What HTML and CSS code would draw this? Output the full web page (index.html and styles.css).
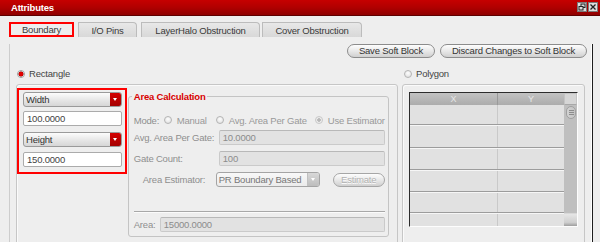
FILE: index.html
```html
<!DOCTYPE html>
<html lang="en">
<head>
	<meta charset="utf-8">
	<title>Attributes</title>
	<link rel="stylesheet" href="styles.css">
</head>
<body>

	<div class="titlebar">
		<span class="title">Attributes</span>
		<span class="win-btns">
			<svg class="win-btn" viewBox="0 0 10 10">
				<rect x="0.5" y="0.5" width="9" height="9" fill="#dedede" stroke="#7a7a7a"/>
				<rect x="4" y="2" width="4" height="3.5" fill="none" stroke="#222"/>
				<rect x="2" y="4.5" width="4" height="3.5" fill="#dedede" stroke="#222"/>
			</svg>
			<svg class="win-btn" viewBox="0 0 10 10">
				<rect x="0.5" y="0.5" width="9" height="9" fill="#dedede" stroke="#7a7a7a"/>
				<path d="M2.5 2.5 L7.5 7.5 M7.5 2.5 L2.5 7.5" stroke="#222" stroke-width="1.3"/>
			</svg>
		</span>
	</div>

	<div class="tabs">
		<div class="tab active tab-boundary">Boundary</div>
		<div class="tab tab-io">I/O Pins</div>
		<div class="tab tab-halo">LayerHalo Obstruction</div>
		<div class="tab tab-cover">Cover Obstruction</div>
	</div>

	<div class="panel">

		<div class="actions">
			<button class="pill">Save Soft Block</button>
			<button class="pill">Discard Changes to Soft Block</button>
		</div>

		<div class="shapes">

			<div class="shape shape-rect">
				<div class="radio-line"><span class="radio on"></span>Rectangle</div>
				<div class="group group-rect">

					<div class="dims">
						<div class="select red"><span>Width</span><i class="arrow"></i></div>
						<div class="field gap-a">100.0000</div>
						<div class="select red gap-b"><span>Height</span><i class="arrow"></i></div>
						<div class="field gap-c">150.0000</div>
					</div>

					<fieldset class="calc">
						<legend>Area Calculation</legend>

						<div class="row row-mode">
							<span class="lbl lbl-mode">Mode:</span>
							<span class="radio off"></span><span class="opt">Manual</span>
							<span class="radio off mode-2"></span><span class="opt">Avg. Area Per Gate</span>
							<span class="radio dis mode-3"></span><span class="opt">Use Estimator</span>
						</div>

						<div class="row row-avg">
							<span class="lbl">Avg. Area Per Gate:</span>
							<div class="field dis">10.0000</div>
						</div>

						<div class="row row-gate">
							<span class="lbl">Gate Count:</span>
							<div class="field dis">100</div>
						</div>

						<div class="row row-est">
							<span class="lbl lbl-est">Area Estimator:</span>
							<div class="select grey"><span>PR Boundary Based</span><i class="arrow"></i></div>
							<button class="pill pill-dis">Estimate</button>
						</div>

						<div class="sep"></div>

						<div class="row row-area">
							<span class="lbl lbl-area">Area:</span>
							<div class="field dis">15000.0000</div>
						</div>
					</fieldset>

				</div>
			</div>

			<div class="shape shape-poly">
				<div class="radio-line"><span class="radio off"></span>Polygon</div>
				<div class="group group-poly">
					<div class="table">
						<div class="cols">
							<div class="trow thead"><span class="c1">X</span><span class="c2">Y</span></div>
							<div class="trow tr-1"><span class="c1"></span><span class="c2"></span></div>
							<div class="trow tr-2"><span class="c1"></span><span class="c2"></span></div>
							<div class="trow tr-3"><span class="c1"></span><span class="c2"></span></div>
							<div class="trow tr-4"><span class="c1"></span><span class="c2"></span></div>
							<div class="trow tr-5"><span class="c1"></span><span class="c2"></span></div>
							<div class="trow tr-6"><span class="c1"></span><span class="c2"></span></div>
						</div>
						<div class="scroll">
							<div class="sb-top"></div>
							<div class="sb-knob"><i></i><i></i><i></i></div>
							<div class="sb-track"></div>
							<div class="sb-bottom"></div>
						</div>
					</div>
				</div>
			</div>

		</div>
	</div>

</body>
</html>
```

FILE: styles.css
```css
* {
	box-sizing: border-box;
}

body {
	margin: 0;
	height: 242px;
	overflow: hidden;
	background: #eeeeee;
	font-family: "Liberation Sans", Arial, sans-serif;
	font-size: 9.5px;
	letter-spacing: -0.2px;
	color: #4a4a4a;
}

/* title bar */

.titlebar {
	height: 16px;
	display: flex;
	align-items: center;
	justify-content: space-between;
	padding: 0 2px 1px 11px;
	background: linear-gradient(#c60000, #b00000 50%, #8e0000);
	border-bottom: 1px solid #5e0000;
}

.title {
	color: #fff;
	font-weight: bold;
}

.win-btns {
	display: flex;
	gap: 1px;
}

.win-btn {
	width: 10px;
	height: 10px;
	display: block;
}

/* tabs */

.tabs {
	display: flex;
	height: 15px;
	margin: 6px 0 0 9px;
}

.tab {
	display: flex;
	align-items: center;
	justify-content: center;
	color: #3a3a3a;
	background: linear-gradient(#e8e8e8, #d8d8d8);
	border: 1px solid #bcbcbc;
	border-bottom: none;
	border-radius: 0 4px 0 0;
}

.tab.active {
	background: #eeeeee;
	border: 2px solid #ff0000;
	border-radius: 0;
}

.tab-boundary { width: 65px; margin-right: 4px; }
.tab-io { width: 59px; margin-right: 4px; }
.tab-halo { width: 119px; margin-right: 2px; }
.tab-cover { width: 100px; }

/* panel */

.panel {
	width: 584px;
	height: 210px;
	margin-left: 9px;
	padding-left: 6px;
	border-left: 1px solid #cdcdcd;
	border-right: 1px solid #1e1e1e;
	box-shadow: inset -1px 0 #fff;
}

.actions {
	display: flex;
	justify-content: flex-end;
	gap: 5px;
	margin-top: 7px;
	padding-right: 5px;
}

.pill {
	height: 14px;
	padding: 0 11px;
	border: 1px solid #8c8c8c;
	border-radius: 7px;
	background: linear-gradient(#fdfdfd, #e6e6e6 55%, #d0d0d0);
	font: inherit;
	letter-spacing: inherit;
	line-height: 12px;
	color: #333;
}

.shapes {
	display: flex;
	gap: 4px;
	margin-top: 10px;
}

.shape {
	display: flex;
	flex-direction: column;
}

.shape-rect { width: 382px; }
.shape-poly { width: 183px; }

.radio-line {
	height: 11px;
	display: flex;
	align-items: center;
	gap: 4px;
	padding-left: 1px;
	color: #444;
}

.shape-poly .radio-line { padding-left: 2px; }

.radio {
	width: 8px;
	height: 8px;
	border-radius: 50%;
	flex: none;
	border: 1px solid #b4b4b4;
	background: radial-gradient(circle at 50% 35%, #fdfdfd, #dcdcdc);
}

.radio.on {
	border-color: #a0a0a0;
	background: radial-gradient(circle, #e00000 0 1.8px, #b00000 2.3px, #f2f2f2 2.8px);
}

.radio.dis {
	border-color: #c8c8c8;
	background: radial-gradient(circle, #b8b8b8 0 1.5px, #ececec 2.1px);
}

.group {
	margin-top: 5px;
	height: 170px;
	border: 1px solid #c6c6c6;
	border-radius: 3px;
	box-shadow: inset 1px 1px #fafafa;
}

.group-rect {
	display: flex;
	align-items: flex-start;
	padding: 3px 8px 0 0;
}

/* width / height box */

.dims {
	width: 110px;
	display: flex;
	flex-direction: column;
	border: 2px solid #ff0000;
	padding: 2px 3px 5px 4px;
}

.gap-a { margin-top: 4px; }
.gap-b { margin-top: 6px; }
.gap-c { margin-top: 5px; }

.select {
	height: 15px;
	display: flex;
	align-items: center;
	padding-left: 2px;
	border: 1px solid #9a9a9a;
	border-radius: 3px;
	overflow: hidden;
	background: linear-gradient(#fcfcfc, #e6e6e6 55%, #d6d6d6);
	color: #333;
}

.select span {
	flex: 1;
	white-space: nowrap;
}

.select .arrow {
	width: 11px;
	align-self: stretch;
	display: flex;
	align-items: center;
	justify-content: center;
	background: linear-gradient(#d40000, #a40000);
}

.select .arrow::after {
	content: "";
	border-left: 2.5px solid transparent;
	border-right: 2.5px solid transparent;
	border-top: 3px solid #fff;
}

.select.grey {
	width: 104px;
	color: #777;
	border-color: #a4a4a4;
	background: linear-gradient(#f8f8f8, #ebebeb);
}

.select.grey .arrow {
	width: 12px;
	background: linear-gradient(#d8d8d8, #bdbdbd);
	border-left: 1px solid #c0c0c0;
}

.field {
	height: 15px;
	display: flex;
	align-items: center;
	padding-left: 3px;
	border: 1px solid #ababab;
	border-radius: 2px;
	background: #fff;
	color: #444;
}

.field.dis {
	flex: 1;
	background: #e2e2e2;
	border-color: #cacaca;
	border-top-color: #b8b8b8;
	color: #8c8c8c;
}

/* area calculation */

.calc {
	width: 262px;
	min-width: 0;
	margin: 3px 0 0 1px;
	padding: 0 3px 4px 5px;
	border: 1px solid #c4c4c4;
	border-radius: 3px;
}

.calc legend {
	margin-left: -2px;
	padding: 0 2px;
	line-height: 11px;
	font-weight: bold;
	color: #d80000;
}

.row {
	height: 15px;
	display: flex;
	align-items: center;
}

.lbl {
	width: 85px;
	flex: none;
	color: #8e8e8e;
}

.opt {
	color: #999;
	margin-left: 5px;
}

.row-mode { margin-top: 11px; height: 14px; }
.lbl-mode { width: 30px; }
.mode-2 { margin-left: 9px; }
.mode-3 { margin-left: 8px; }

.row-avg { margin-top: 3px; }
.row-gate { margin-top: 6px; }
.row-est { margin-top: 6px; }

.lbl-est {
	width: 82px;
	padding-left: 9px;
}

.pill-dis {
	width: 52px;
	margin-left: 13px;
	padding: 0;
	border-color: #a6a6a6;
	color: #b2b2b2;
	text-shadow: 0 1px #fff;
}

.sep {
	height: 2px;
	margin-top: 24px;
	border-top: 1px solid #a8a8a8;
	border-bottom: 1px solid #fbfbfb;
}

.row-area { margin-top: 4px; }
.lbl-area { width: 26px; }

/* polygon table */

.group-poly {
	padding: 7px 6px 0 6px;
}

.table {
	width: 169px;
	height: 135px;
	display: flex;
	border: 1px solid;
	border-color: #2c2c2c #fdfdfd #fdfdfd #2c2c2c;
}

.cols {
	width: 154px;
	display: flex;
	flex-direction: column;
	background: #e1e1e1;
}

.trow {
	display: flex;
	flex: none;
	border-top: 1px solid #f6f6f6;
	border-bottom: 1px solid #9c9c9c;
}

.trow .c1 {
	width: 88px;
	border-right: 1px solid #c9c9c9;
}

.trow .c2 {
	flex: 1;
}

.thead {
	height: 12px;
	border: none;
	background: linear-gradient(#c2c2c2, #acacac);
	color: #e6e6e6;
	font-size: 9px;
	line-height: 12px;
	text-align: center;
}

.thead .c1 { border-right-color: #9a9a9a; }

.tr-1 { height: 20px; border-top: none; }
.tr-2 { height: 23px; }
.tr-3 { height: 22px; }
.tr-4 { height: 22px; }
.tr-5 { height: 21px; }
.tr-6 { flex: 1; border-bottom: none; }

.scroll {
	width: 13px;
	display: flex;
	flex-direction: column;
	background: #bfbfbf;
}

.sb-top {
	height: 12px;
	background: #d6d6d6;
	border: 1px solid #c4c4c4;
	border-bottom-color: #a8a8a8;
}

.sb-knob {
	height: 13px;
	margin: 1px 1px 0 2px;
	display: flex;
	flex-direction: column;
	align-items: center;
	justify-content: center;
	gap: 1px;
	border: 1px solid #a0a0a0;
	border-radius: 5px;
	background: linear-gradient(90deg, #d2d2d2, #c4c4c4);
}

.sb-knob i {
	width: 5px;
	height: 1px;
	background: #8c8c8c;
}

.sb-track {
	flex: 1;
}

.sb-bottom {
	height: 13px;
	background: linear-gradient(#e6e6e6, #cfcfcf 70%, #9e9e9e);
	border-top: 1px solid #d8d8d8;
}
```
